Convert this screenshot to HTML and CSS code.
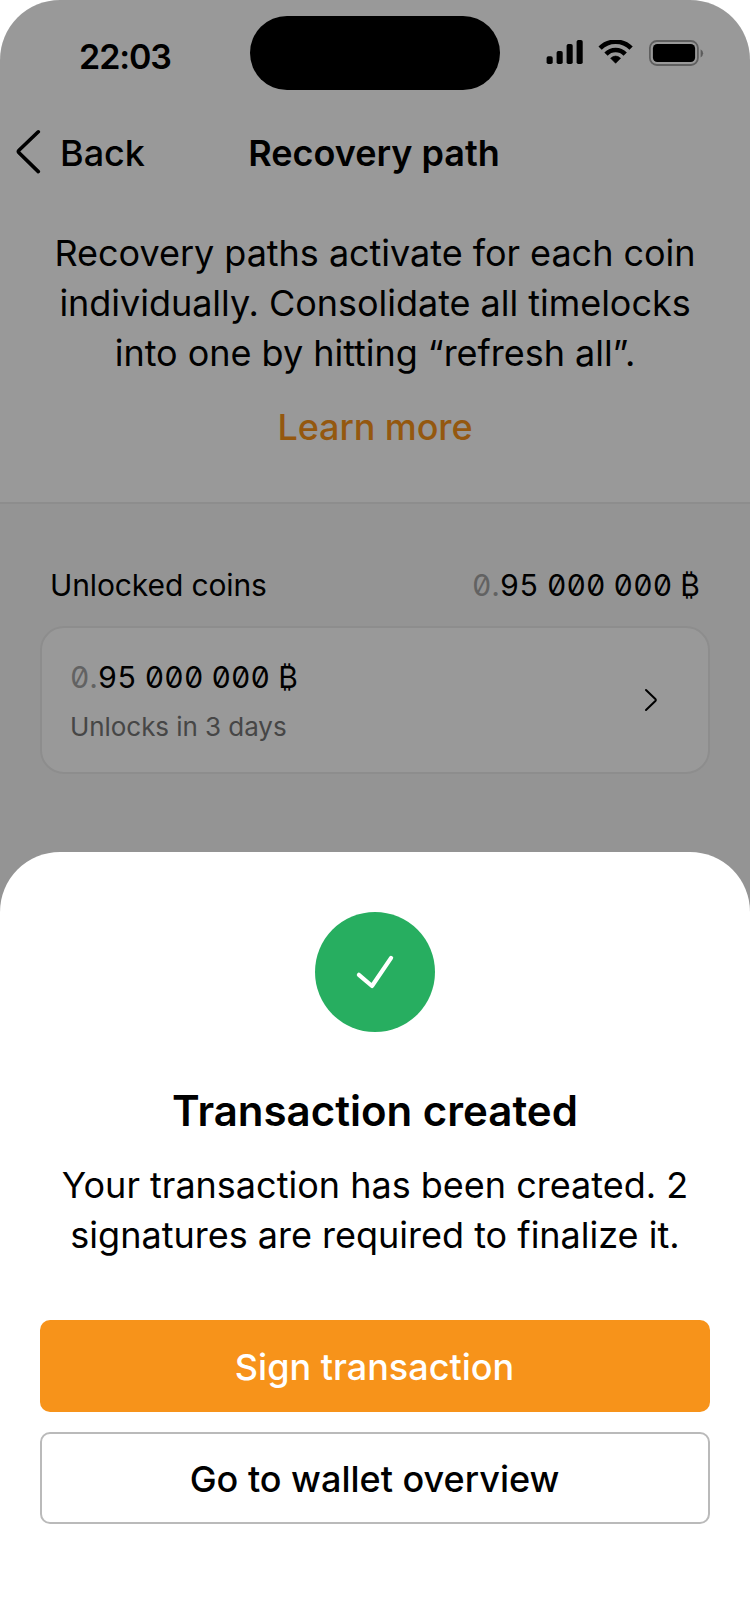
FILE: index.html
```html
<!DOCTYPE html>
<html lang="en">
<head>
<meta charset="utf-8">
<title>Recovery path</title>
<link rel="stylesheet" href="styles.css">
</head>
<body>
<div class="screen">
  <div class="page">
    <div class="status">
      <span class="time">22:03</span>
      <span class="island"></span>
      <svg class="status-icons" width="160" height="28" viewBox="0 0 160 28">
        <rect x="0.6" y="16.2" width="6.1" height="7.8" rx="1.8"/>
        <rect x="10.6" y="11" width="6.1" height="13" rx="1.8"/>
        <rect x="20.6" y="4" width="6.1" height="20" rx="1.8"/>
        <rect x="30.6" y="0" width="6.1" height="24" rx="1.8"/>
        <g transform="translate(69.6 23.3)">
          <path d="M0 0L-5-5.1Q0-9.4 5-5.1Z" stroke="#000" stroke-width="0.6" stroke-linejoin="round"/>
          <path d="M-9.6-9.2A13.4 13.4 0 0 1 9.6-9.2" fill="none" stroke="#000" stroke-width="4.6"/>
          <path d="M-15.5-15.1A21.8 21.8 0 0 1 15.5-15.1" fill="none" stroke="#000" stroke-width="4.6"/>
        </g>
        <rect x="103.9" y="1" width="48" height="24" rx="7" fill="none" stroke="#000" stroke-opacity=".38" stroke-width="1.8"/>
        <rect x="106.9" y="4" width="42.2" height="18" rx="4.4"/>
        <path d="M154.6 9.2v8.2a4.6 4.6 0 0 0 0-8.2Z" fill-opacity=".4"/>
      </svg>
    </div>
    <div class="nav">
      <svg class="nav-arrow" width="26" height="46" viewBox="0 0 26 46"><path d="M22.3 2.8L3 21.3Q1.8 22.5 3 23.7L22.3 42.6" fill="none" stroke="#000" stroke-width="3.6" stroke-linecap="round"/></svg>
      <span class="back">Back</span>
      <span class="nav-title">Recovery path</span>
    </div>
    <div class="intro">
      <p class="intro-text">Recovery paths activate for each coin<br>individually. Consolidate all timelocks<br>into one by hitting “refresh all”.</p>
      <a class="learn">Learn more</a>
    </div>
    <div class="coins">
      <div class="coins-head">
        <span class="coins-label">Unlocked coins</span>
        <span class="amount"><span class="zero">0.</span>95 000 000 ₿</span>
      </div>
      <div class="card">
        <div class="card-text">
          <span class="amount"><span class="zero">0.</span>95 000 000 ₿</span>
          <span class="note">Unlocks in 3 days</span>
        </div>
        <svg class="chevron" width="14" height="24" viewBox="0 0 14 24"><path d="M2 2L11.6 11.3Q12.2 12 11.6 12.7L2 22" fill="none" stroke="#000" stroke-width="2" stroke-linecap="round"/></svg>
      </div>
    </div>
  </div>
  <div class="scrim"></div>
  <div class="sheet">
    <svg class="badge" width="120" height="120" viewBox="0 0 120 120"><circle cx="60" cy="60" r="60" fill="#27ae60"/><path d="M43.9 62.8L57 74L76.1 45.9" fill="none" stroke="#fff" stroke-width="4.2" stroke-linecap="round" stroke-linejoin="round"/></svg>
    <h2 class="sheet-title">Transaction created</h2>
    <p class="sheet-text">Your transaction has been created. 2<br>signatures are required to finalize it.</p>
    <div class="actions">
      <button class="btn btn-primary">Sign transaction</button>
      <button class="btn btn-outline">Go to wallet overview</button>
    </div>
  </div>
</div>
</body>
</html>
```
FILE: styles.css
```css
* { box-sizing: border-box; }
body { margin: 0; background: #fff; font-family: Inter, "Liberation Sans", sans-serif; color: #000; }
p, h2 { margin: 0; }
svg { display: block; flex: none; }
.screen { position: relative; width: 750px; height: 1624px; overflow: hidden; border-radius: 60px 60px 0 0; background: #fff; }
.page { height: 100%; display: flex; flex-direction: column; background: #f7f7f7; }
.status { height: 106px; flex: none; display: grid; grid-template-columns: 250px 250px 250px; background: #fff; }
.time { text-align: center; font-size: 34px; line-height: 50px; font-weight: 600; letter-spacing: -1.1px; padding-top: 32px; }
.island { height: 74px; margin-top: 16px; border-radius: 37px; background: #000; }
.status-icons { margin: 40px 0 0 46px; }
.nav { height: 94px; flex: none; padding: 22px 16px 0; display: grid; grid-template-columns: 26px 170px 324px 1fr; background: #fff; font-size: 36px; line-height: 50px; }
.nav-arrow { margin-top: 1px; }
.back { font-weight: 500; padding-left: 18px; }
.nav-title { font-weight: 600; text-align: center; }
.intro { height: 304px; flex: none; padding-top: 28px; text-align: center; background: #fff; border-bottom: 2px solid #ebebeb; font-size: 36px; line-height: 50px; }
.intro-text { letter-spacing: -0.03px; }
.learn { display: block; margin-top: 24px; color: #f7931a; font-weight: 500; letter-spacing: -0.1px; }
.coins { padding: 61px 40px 0; font-size: 30px; line-height: 40px; }
.coins-head { display: flex; justify-content: space-between; padding: 0 10px; }
.coins-label { letter-spacing: -0.12px; }
.amount { font-feature-settings: "tnum", "zero"; letter-spacing: 0.07px; }
.zero { color: #a3a3a3; }
.card { height: 148px; margin-top: 21px; padding: 0 50px 0 28px; display: flex; justify-content: space-between; align-items: center; border: 2px solid #ebebeb; border-radius: 24px; background: #fff; }
.card-text { display: flex; flex-direction: column; gap: 10px; padding-top: 3px; }
.note { font-size: 26px; letter-spacing: -0.06px; color: #757575; }
.scrim { position: absolute; inset: 0; background: rgba(0, 0, 0, .4); }
.sheet { position: absolute; left: 0; right: 0; bottom: 0; height: 772px; padding: 60px 40px 0; display: flex; flex-direction: column; align-items: center; border-radius: 60px 60px 0 0; background: #fff; text-align: center; }
.sheet-title { margin-top: 49px; font-size: 42px; line-height: 60px; font-weight: 600; }
.sheet-text { margin-top: 19px; font-size: 36px; line-height: 50px; }
.actions { align-self: stretch; margin-top: 60px; display: grid; gap: 20px; }
.btn { height: 92px; padding: 2px 1px 0 0; border: 0; border-radius: 10px; font: 500 36px/50px Inter, "Liberation Sans", sans-serif; }
.btn-primary { background: #f7931a; color: #fff; }
.btn-outline { background: #fff; color: #000; border: 2px solid #bababa; }
```
